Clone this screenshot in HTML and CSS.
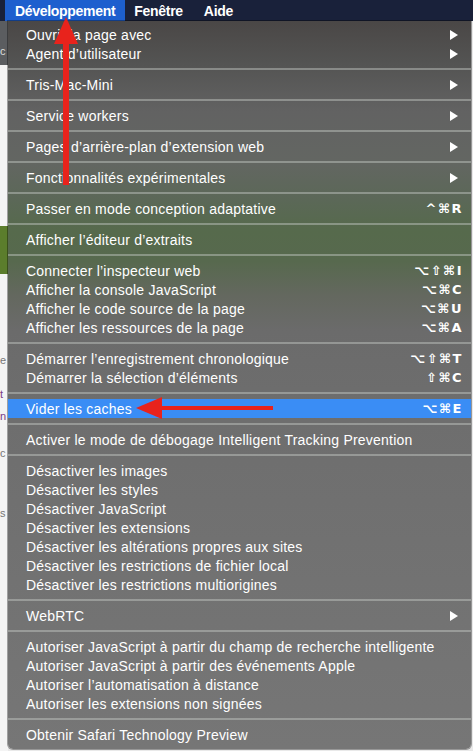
FILE: index.html
```html
<!DOCTYPE html>
<html lang="fr">
<head>
<meta charset="utf-8">
<link rel="stylesheet" href="styles.css">
</head>
<body>
<div class="page">
  <div class="page-dark"></div>
  <div class="page-letter l1">c</div>
  <div class="page-green"></div>
  <div class="page-letter l2">e</div>
  <div class="page-letter l3 purple">t</div>
  <div class="page-letter l4 purple">n</div>
  <div class="page-letter l5">c</div>
  <div class="page-letter l6">s</div>
</div>

<div class="menubar">
  <span class="mb-item active">Développement</span>
  <span class="mb-item">Fenêtre</span>
  <span class="mb-item">Aide</span>
</div>

<div class="menu">
  <div class="row"><span>Ouvrir la page avec</span><span class="sub"></span></div>
  <div class="row"><span>Agent d’utilisateur</span><span class="sub"></span></div>
  <div class="sep"></div>
  <div class="row"><span>Tris-Mac-Mini</span><span class="sub"></span></div>
  <div class="sep"></div>
  <div class="row"><span>Service workers</span><span class="sub"></span></div>
  <div class="sep"></div>
  <div class="row"><span>Pages d’arrière-plan d’extension web</span><span class="sub"></span></div>
  <div class="sep"></div>
  <div class="row"><span>Fonctionnalités expérimentales</span><span class="sub"></span></div>
  <div class="sep"></div>
  <div class="row"><span>Passer en mode conception adaptative</span><span class="key">^⌘R</span></div>
  <div class="sep"></div>
  <div class="row"><span>Afficher l’éditeur d’extraits</span></div>
  <div class="sep"></div>
  <div class="row"><span>Connecter l’inspecteur web</span><span class="key">⌥⇧⌘I</span></div>
  <div class="row"><span>Afficher la console JavaScript</span><span class="key">⌥⌘C</span></div>
  <div class="row"><span>Afficher le code source de la page</span><span class="key">⌥⌘U</span></div>
  <div class="row"><span>Afficher les ressources de la page</span><span class="key">⌥⌘A</span></div>
  <div class="sep"></div>
  <div class="row"><span>Démarrer l’enregistrement chronologique</span><span class="key">⌥⇧⌘T</span></div>
  <div class="row"><span>Démarrer la sélection d’éléments</span><span class="key">⇧⌘C</span></div>
  <div class="sep"></div>
  <div class="row selected"><span>Vider les caches</span><span class="key">⌥⌘E</span></div>
  <div class="sep"></div>
  <div class="row"><span>Activer le mode de débogage Intelligent Tracking Prevention</span></div>
  <div class="sep"></div>
  <div class="row"><span>Désactiver les images</span></div>
  <div class="row"><span>Désactiver les styles</span></div>
  <div class="row"><span>Désactiver JavaScript</span></div>
  <div class="row"><span>Désactiver les extensions</span></div>
  <div class="row"><span>Désactiver les altérations propres aux sites</span></div>
  <div class="row"><span>Désactiver les restrictions de fichier local</span></div>
  <div class="row"><span>Désactiver les restrictions multiorigines</span></div>
  <div class="sep"></div>
  <div class="row"><span>WebRTC</span><span class="sub"></span></div>
  <div class="sep"></div>
  <div class="row"><span>Autoriser JavaScript à partir du champ de recherche intelligente</span></div>
  <div class="row"><span>Autoriser JavaScript à partir des événements Apple</span></div>
  <div class="row"><span>Autoriser l’automatisation à distance</span></div>
  <div class="row"><span>Autoriser les extensions non signées</span></div>
  <div class="sep"></div>
  <div class="row"><span>Obtenir Safari Technology Preview</span></div>
</div>

<svg class="arrow arrow-up" width="30" height="170" viewBox="0 0 30 170">
  <polygon points="12,26 18,26 18,168 12,168" fill="#e8231c"/>
  <polygon points="15,0 27,27 3,27" fill="#e8231c"/>
</svg>
<svg class="arrow arrow-left" width="140" height="24" viewBox="0 0 140 24">
  <polygon points="24,10 137,10 137,14 24,14" fill="#e8231c"/>
  <polygon points="0,12 26,1 26,23" fill="#e8231c"/>
</svg>
</body>
</html>
```

FILE: styles.css
```css
html, body {
  margin: 0;
  padding: 0;
}
body {
  width: 473px;
  height: 751px;
  overflow: hidden;
  position: relative;
  background: #e9e9e9;
  font-family: "Helvetica Neue", "Liberation Sans", "DejaVu Sans", Arial, sans-serif;
  -webkit-font-smoothing: antialiased;
}

/* page behind the menu (only a thin strip shows at the left) */
.page {
  position: absolute;
  left: 0;
  top: 0;
  width: 8px;
  height: 751px;
  background: #f4f4f4;
  z-index: 0;
}
.page-dark {
  position: absolute;
  left: 0; top: 21px; width: 8px; height: 44px;
  background: #5b5d60;
}
.page-green {
  position: absolute;
  left: 0; top: 226px; width: 8px; height: 48px;
  background: #5b7d2c;
}
.page-letter {
  position: absolute;
  left: 0;
  font-size: 11px;
  line-height: 13px;
  color: #777;
  font-family: "Liberation Sans", sans-serif;
}
.page-letter.purple { color: #7a3b84; }
.l1 { top: 45px; color: #ddd; }
.l2 { top: 354px; }
.l3 { top: 388px; }
.l4 { top: 410px; }
.l5 { top: 447px; }
.l6 { top: 507px; }

/* menubar */
.menubar {
  position: relative;
  z-index: 1;
  height: 21px;
  background: #19213a;
  display: flex;
  align-items: stretch;
  padding-left: 5px;
  color: #fff;
  font-size: 14px;
  font-weight: bold;
  letter-spacing: -0.3px;
}
.mb-item {
  display: flex;
  align-items: center;
}
.mb-item.active {
  background: #1d5fce;
  padding: 0 10px 0 10px;
}
.mb-item + .mb-item { padding-left: 9px; padding-right: 12px; }

/* dropdown menu */
.menu {
  position: relative;
  z-index: 1;
  margin-left: 8px;
  width: 463px;
  padding: 4px 0 5px;
  border-radius: 0 0 5px 5px;
  box-shadow: 0 0 0 1px rgba(0,0,0,0.35);
  background: linear-gradient(180deg,
    #4a4746 0px,
    #535352 40px,
    #626262 90px,
    #636662 140px,
    #5b6857 180px,
    #566a4c 210px,
    #57694e 240px,
    #64685f 275px,
    #6b6b6b 310px,
    #6e6e6e 400px,
    #727272 560px,
    #767676 727px);
  color: #fff;
  font-size: 14px;
}
.row {
  height: 19px;
  display: flex;
  align-items: center;
  justify-content: space-between;
  padding: 0 9px 0 18px;
  white-space: nowrap;
  letter-spacing: 0.22px;
}
.row.selected {
  background: #3a8df5;
}
.sep {
  height: 12px;
  display: flex;
  align-items: center;
}
.sep::before {
  content: "";
  display: block;
  width: 100%;
  height: 2px;
  background: rgba(200, 205, 200, 0.45);
}
.sub {
  width: 0;
  height: 0;
  border-top: 5px solid transparent;
  border-bottom: 5px solid transparent;
  border-left: 8px solid #fff;
  margin-right: 4px;
}
.key {
  font-family: "DejaVu Sans", sans-serif;
  font-size: 13px;
  font-weight: bold;
  letter-spacing: 1.5px;
  margin-right: -1px;
}

/* red annotation arrows */
.arrow {
  position: absolute;
  z-index: 2;
}
.arrow-up { left: 51px; top: 17px; }
.arrow-left { left: 136px; top: 396px; }
```
